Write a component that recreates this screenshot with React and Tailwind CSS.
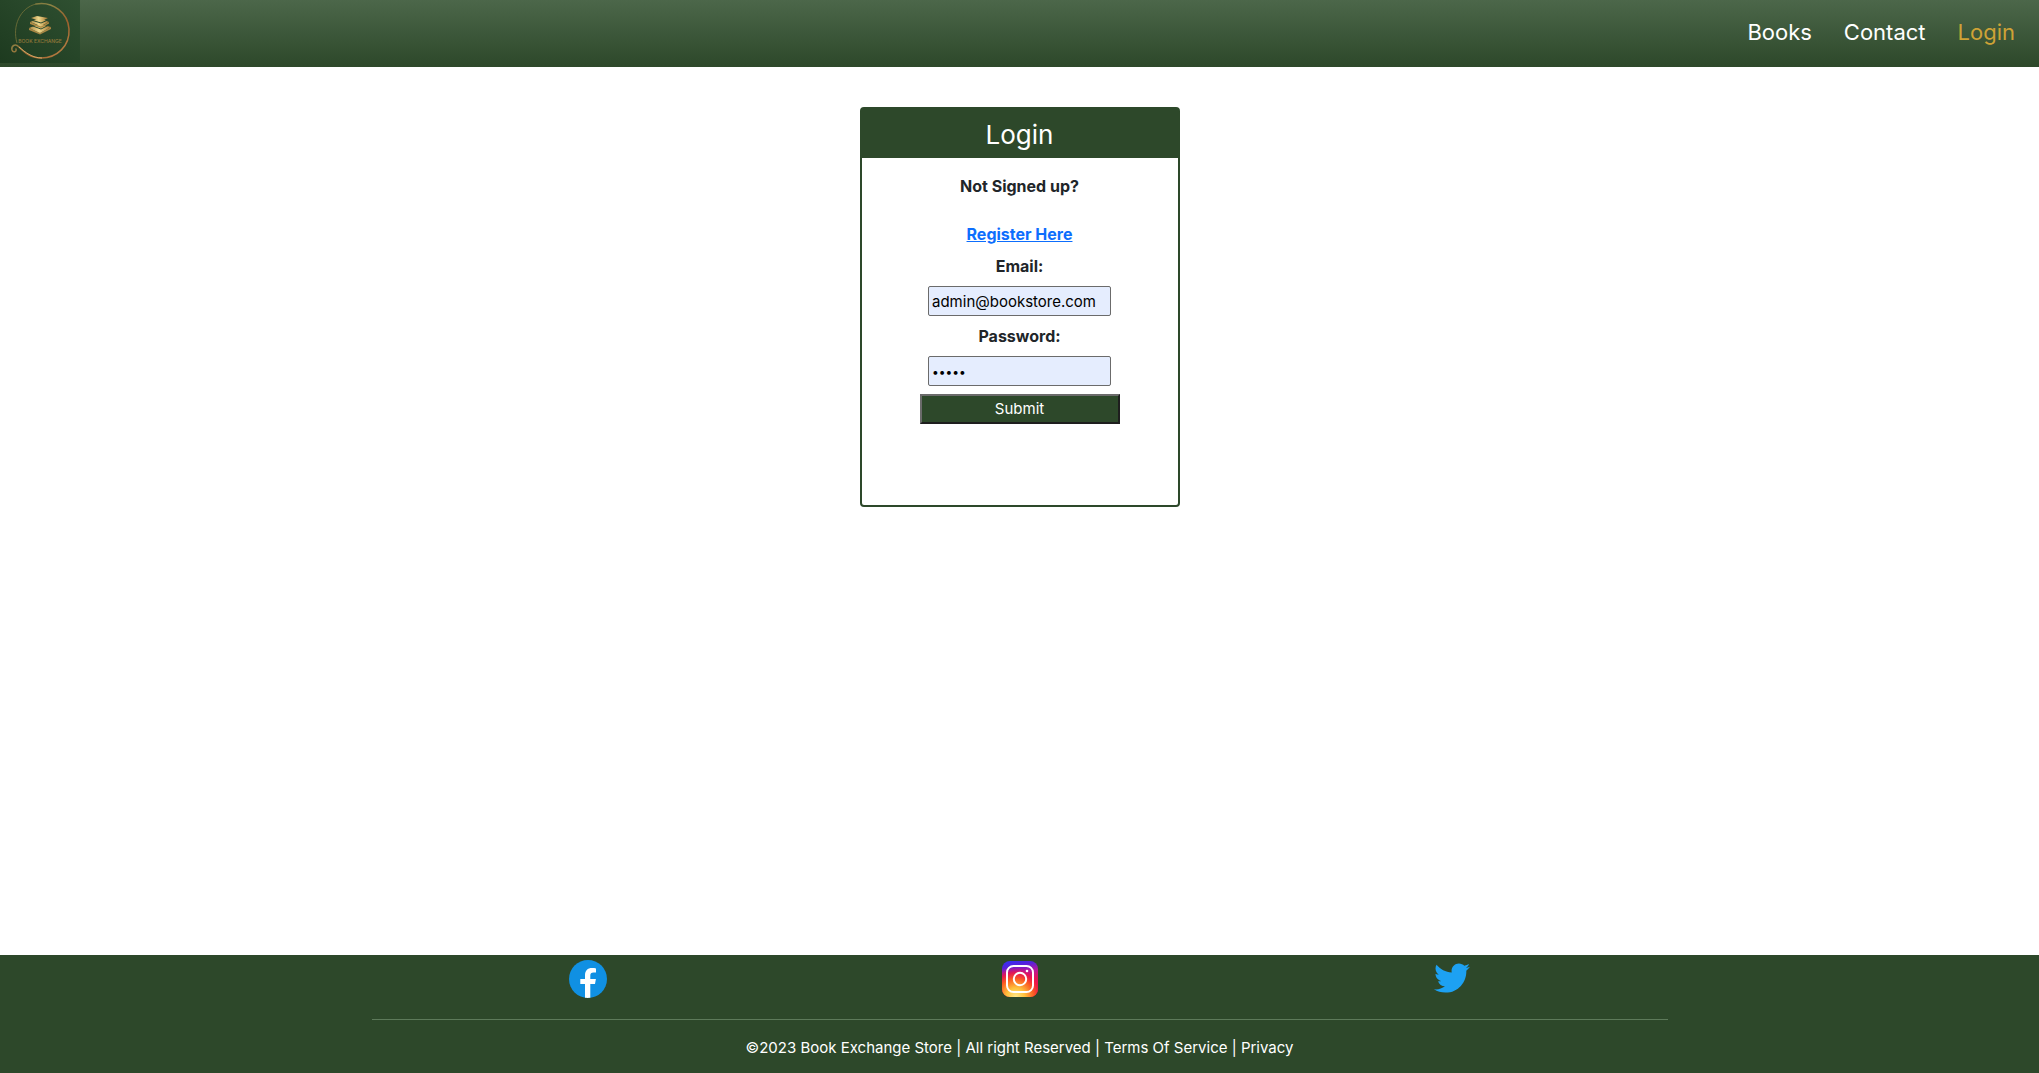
import React from "react";
import { FaTwitter } from "react-icons/fa";

function Logo() {
  return (
    <svg viewBox="0 0 80 63" className="block h-[63px] w-20" role="img" aria-label="Book Exchange">
      <defs>
        <linearGradient id="logoBg" x1="0" y1="1" x2="1" y2="0">
          <stop offset="0" stopColor="#1d3a1f" />
          <stop offset="1" stopColor="#2f5031" />
        </linearGradient>
        <linearGradient id="ring" x1="0" y1="0" x2="1" y2="1">
          <stop offset="0" stopColor="#6d6a34" />
          <stop offset="0.35" stopColor="#8d8445" />
          <stop offset="0.65" stopColor="#9c5f2c" />
          <stop offset="1" stopColor="#c08a4c" />
        </linearGradient>
        <linearGradient id="gold" x1="0" y1="0" x2="1" y2="0">
          <stop offset="0" stopColor="#a88440" />
          <stop offset="0.45" stopColor="#efd98c" />
          <stop offset="1" stopColor="#a3712d" />
        </linearGradient>
      </defs>
      <rect width="80" height="63" fill="url(#logoBg)" />
      <path d="M17 43C12 26 20 8 36 4" fill="none" stroke="#77733a" strokeWidth="0.8" />
      <path
        d="M36 4C53 1 68 13 69 29C70 46 57 58 41 58C30 58 24 52 19 47C15 43 11 46 12 50C13 53 17 52 16 49"
        fill="none"
        stroke="url(#ring)"
        strokeWidth="1.5"
        strokeLinecap="round"
      />
      <path d="M42 58C32 58 25 52 19 47" fill="none" stroke="#d5a866" strokeWidth="1" />
      <path d="M29 28L40 33L51 27V29L40 34.500L29 30Z" fill="#a98643" />
      <path d="M29 28L39 24L51 27L40 33Z" fill="url(#gold)" />
      <path d="M30 25L41 29L49 25" fill="none" stroke="#2c4a2c" strokeWidth="1" />
      <path d="M30 22L41 26.500L49 22V23.500L41 28L30 24Z" fill="#b18c44" />
      <path d="M30 22L40 18L49 22L41 26Z" fill="url(#gold)" />
      <path d="M31 20L41 23L48 20" fill="none" stroke="#2c4a2c" strokeWidth="1" />
      <path d="M31 18L37 16L48 18L41 21.500Z" fill="url(#gold)" />
      <text x="40" y="43" textAnchor="middle" fontFamily="Inter, sans-serif" fontSize="5" fontWeight="500" fill="#94793a">
        BOOK EXCHANGE
      </text>
    </svg>
  );
}

function FacebookIcon() {
  return (
    <svg viewBox="0 0 38 38" className="size-[38px]" aria-hidden="true">
      <circle cx="19" cy="19" r="19" fill="#1090e3" />
      <path
        d="M16 37.800V24H11.300V19H16V15.500C16 10.500 18.500 8 23 8C24.500 8 26 8.200 27 8.400V12.600H24.500C22.200 12.600 21.300 13.600 21.300 15.600V19H26.900L26 24H21.300V37.800C19.500 38 17.800 38 16 37.800Z"
        fill="#fff"
      />
    </svg>
  );
}

function InstagramIcon() {
  return (
    <svg viewBox="0 0 36 36" className="size-9" aria-hidden="true">
      <defs>
        <linearGradient id="igTop" x1="0.3" y1="0" x2="0.5" y2="1">
          <stop offset="0" stopColor="#3a2cf0" />
          <stop offset="0.14" stopColor="#5421dc" />
          <stop offset="0.35" stopColor="#b5179e" />
          <stop offset="0.6" stopColor="#e8134f" />
        </linearGradient>
        <radialGradient id="igGlow" cx="0.38" cy="1" r="0.85">
          <stop offset="0" stopColor="#ffe98a" />
          <stop offset="0.3" stopColor="#ffc13c" />
          <stop offset="0.6" stopColor="#fa5a23" />
          <stop offset="0.8" stopColor="#ee1745" stopOpacity="0.8" />
          <stop offset="1" stopColor="#d01080" stopOpacity="0" />
        </radialGradient>
      </defs>
      <rect width="36" height="36" rx="8" fill="url(#igTop)" />
      <rect width="36" height="36" rx="8" fill="url(#igGlow)" />
      <rect x="5" y="5" width="26" height="26" rx="6.500" fill="none" stroke="#fff" strokeWidth="2" />
      <circle cx="18" cy="18" r="6.200" fill="none" stroke="#fff" strokeWidth="2" />
      <circle cx="25" cy="10" r="1.300" fill="#fff" />
    </svg>
  );
}

const fieldClass =
  "mt-1 h-[30px] w-[183px] rounded-[2px] border border-[#6b6b6b] bg-[#e5edfe] px-[3px] text-black";
const labelClass = "flex h-8 items-center text-base font-bold";

export default function App() {
  return (
    <div className="flex min-h-screen flex-col bg-white font-['Inter',sans-serif] text-[#212529]">
      <header className="flex h-[67px] items-start justify-between bg-linear-to-b from-[#4c674a] to-[#2d482a]">
        <a href="#home">
          <Logo />
        </a>
        <nav className="flex h-16 items-center gap-8 pr-6 text-[22px] text-white">
          <a href="#books">Books</a>
          <a href="#contact">Contact</a>
          <a href="#login" className="text-[#cfa236]">Login</a>
        </nav>
      </header>

      <main className="flex flex-1 justify-center pt-10 pb-10">
        <form
          className="flex min-h-[400px] w-80 flex-col items-center self-start rounded border-2 border-[#2d482a]"
          onSubmit={(e) => e.preventDefault()}
        >
          <h1 className="flex h-[49px] w-full items-center justify-center bg-[#2d482a] pt-0.5 text-[26px] font-normal text-white">
            Login
          </h1>
          <p className="mt-3 flex h-8 items-center text-base font-bold">Not Signed up?</p>
          <a href="#register" className="mt-4 flex h-8 items-center text-base font-bold text-[#0d6efd] underline">
            Register Here
          </a>
          <label htmlFor="email" className={labelClass}>Email:</label>
          <input id="email" type="email" defaultValue="admin@bookstore.com" className={`${fieldClass} text-[15px]`} />
          <label htmlFor="password" className={`${labelClass} mt-1`}>Password:</label>
          <input id="password" type="password" defaultValue="admin" className={`${fieldClass} text-xs`} />
          <button
            type="submit"
            className="mt-2 flex h-[30px] w-[200px] items-center justify-center border-2 border-t-[#6b6b6b] border-r-[#1e1e1e] border-b-[#1e1e1e] border-l-[#6b6b6b] bg-[#2d482a] text-[15px] text-white"
          >
            Submit
          </button>
        </form>
      </main>

      <footer className="bg-[#2d482a] px-4 text-white">
        <div className="mx-auto max-w-[1296px]">
          <div className="grid h-16 grid-cols-3 items-start justify-items-center pt-[5px]">
            <a href="#facebook" aria-label="Facebook"><FacebookIcon /></a>
            <a href="#instagram" aria-label="Instagram" className="pt-px"><InstagramIcon /></a>
            <a href="#twitter" aria-label="Twitter"><FaTwitter className="size-9 text-[#1da1f2]" /></a>
          </div>
          <hr className="border-[#5d7a5a]" />
          <p className="flex h-[53px] items-center justify-center pt-1 text-[15px]">
            ©2023 Book Exchange Store | All right Reserved | Terms Of Service | Privacy
          </p>
        </div>
      </footer>
    </div>
  );
}
